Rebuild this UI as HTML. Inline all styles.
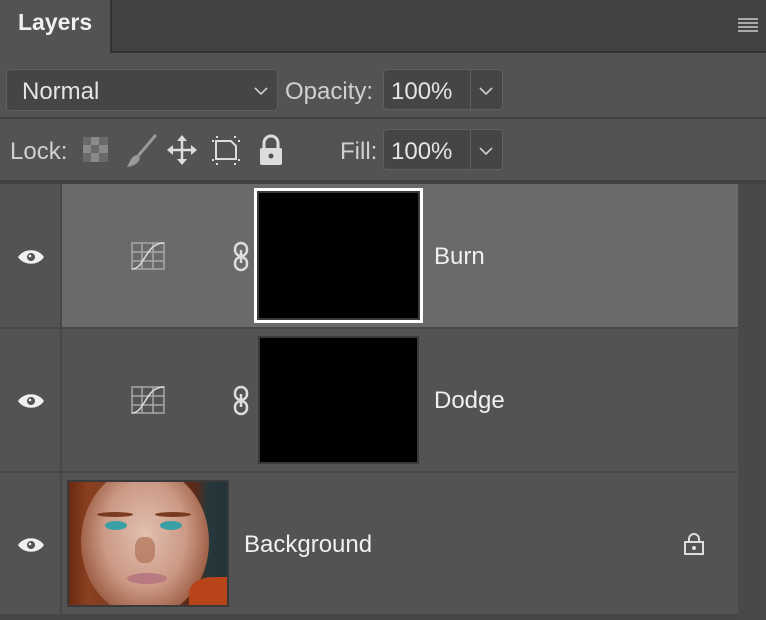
<!DOCTYPE html>
<html><head><style>
*{margin:0;padding:0;box-sizing:border-box}
body{width:766px;height:620px;background:#535353;font-family:"Liberation Sans",sans-serif;color:#e6e6e6;position:relative;overflow:hidden}
.a{position:absolute}
.box{position:absolute;background:#454545;border:1px solid #5f5f5f;border-radius:4px}
.t{position:absolute;font-size:24px;color:#e4e4e4}
</style></head><body>
<div class="a" style="left:0;top:0;width:766px;height:51px;background:#424242"></div>
<div class="a" style="left:0;top:51px;width:766px;height:2px;background:#333"></div>
<div class="a" style="left:0;top:0;width:110px;height:53px;background:#535353"></div>
<div class="a" style="left:110px;top:0;width:2px;height:52px;background:#333"></div>
<div class="t" style="left:18px;top:9px;font-weight:bold;font-size:23px;color:#f0f0f0">Layers</div>
<div class="a" style="left:738px;top:18px;width:20px;height:2px;background:#aaa;box-shadow:0 4px 0 #aaa,0 8px 0 #aaa,0 12px 0 #aaa"></div>

<div class="box" style="left:6px;top:69px;width:272px;height:42px"></div>
<div class="t" style="left:22px;top:78px">Normal</div>
<svg class="a" style="left:254px;top:86px" width="14" height="10"><path d="M1 2 L7 8 L13 2" stroke="#ccc" stroke-width="1.6" fill="none"/></svg>
<div class="t" style="left:285px;top:78px;color:#d0d0d0">Opacity:</div>
<div class="box" style="left:383px;top:69px;width:120px;height:41px"></div>
<div class="a" style="left:470px;top:70px;width:1px;height:39px;background:#5f5f5f"></div>
<div class="t" style="left:391px;top:78px">100%</div>
<svg class="a" style="left:479px;top:86px" width="14" height="10"><path d="M1 2 L7 8 L13 2" stroke="#ccc" stroke-width="1.6" fill="none"/></svg>

<div class="a" style="left:0;top:117px;width:766px;height:2px;background:#424242"></div>

<div class="t" style="left:10px;top:138px;color:#d0d0d0">Lock:</div>
<svg class="a" style="left:82px;top:136px" width="28" height="28"><rect x="1" y="1" width="25" height="25" fill="#8a8a8a"/><g fill="#6a6a6a"><rect x="1" y="1" width="8" height="8"/><rect x="17" y="1" width="9" height="8"/><rect x="9" y="9" width="8" height="8"/><rect x="1" y="17" width="8" height="9"/><rect x="17" y="17" width="9" height="9"/></g></svg>
<svg class="a" style="left:124px;top:134px" width="34" height="34"><path d="M31 2 L14 22" stroke="#9a9a9a" stroke-width="3" stroke-linecap="round"/><path d="M13 21 C7 22 6 28 3 33 C10 32 15 29 16 24Z" fill="#9a9a9a"/></svg>
<svg class="a" style="left:166px;top:134px" width="32" height="32"><g stroke="#ddd" stroke-width="2.5" fill="none"><path d="M16 4V28M4 16H28"/></g><g fill="#ddd"><path d="M16 1 L21 7 H11Z"/><path d="M16 31 L21 25 H11Z"/><path d="M1 16 L7 11 V21Z"/><path d="M31 16 L25 11 V21Z"/></g></svg>
<svg class="a" style="left:209px;top:134px" width="34" height="32"><path d="M7 7 H22 L27 12 V25 H7 Z" stroke="#ddd" stroke-width="2" fill="none"/><g fill="#ddd"><rect x="3" y="6" width="2" height="2"/><rect x="7" y="2" width="2" height="2"/><rect x="25" y="2" width="2" height="2"/><rect x="29" y="6" width="2" height="2"/><rect x="3" y="25" width="2" height="2"/><rect x="7" y="29" width="2" height="2"/><rect x="25" y="29" width="2" height="2"/><rect x="29" y="25" width="2" height="2"/></g></svg>
<svg class="a" style="left:257px;top:134px" width="28" height="32"><path d="M7 14 V9 a7 7 0 0 1 14 0 V14" stroke="#ddd" stroke-width="3" fill="none"/><rect x="3" y="14" width="22" height="17" rx="2" fill="#ddd"/><circle cx="14" cy="22" r="2.5" fill="#535353"/></svg>
<div class="t" style="left:340px;top:138px;color:#d0d0d0">Fill:</div>
<div class="box" style="left:383px;top:129px;width:120px;height:41px"></div>
<div class="a" style="left:470px;top:130px;width:1px;height:39px;background:#5f5f5f"></div>
<div class="t" style="left:391px;top:138px">100%</div>
<svg class="a" style="left:479px;top:146px" width="14" height="10"><path d="M1 2 L7 8 L13 2" stroke="#ccc" stroke-width="1.6" fill="none"/></svg>

<div class="a" style="left:0;top:180px;width:766px;height:4px;background:#424242"></div>
<div class="a" style="left:738px;top:184px;width:28px;height:436px;background:#494949"></div>

<div class="a" style="left:0;top:184px;width:60px;height:143px;background:#535353"></div>
<div class="a" style="left:60px;top:184px;width:2px;height:436px;background:#474747"></div>
<div class="a" style="left:62px;top:184px;width:676px;height:143px;background:#6a6a6a"></div>
<div class="a" style="left:0;top:327px;width:738px;height:2px;background:#474747"></div>
<div class="a" style="left:0;top:471px;width:738px;height:2px;background:#474747"></div>
<div class="a" style="left:0;top:614px;width:738px;height:6px;background:#474747"></div>

<svg class="a" style="left:17px;top:248px" width="28" height="18"><path d="M1 9 C7 0 21 0 27 9 C21 18 7 18 1 9Z" fill="#f0f0f0"/><circle cx="14" cy="9" r="4" fill="#535353"/><circle cx="13" cy="8" r="1.3" fill="#f0f0f0"/></svg>
<svg class="a" style="left:17px;top:392px" width="28" height="18"><path d="M1 9 C7 0 21 0 27 9 C21 18 7 18 1 9Z" fill="#f0f0f0"/><circle cx="14" cy="9" r="4" fill="#535353"/><circle cx="13" cy="8" r="1.3" fill="#f0f0f0"/></svg>
<svg class="a" style="left:17px;top:536px" width="28" height="18"><path d="M1 9 C7 0 21 0 27 9 C21 18 7 18 1 9Z" fill="#f0f0f0"/><circle cx="14" cy="9" r="4" fill="#535353"/><circle cx="13" cy="8" r="1.3" fill="#f0f0f0"/></svg>

<svg class="a" style="left:131px;top:242px" width="34" height="28"><g stroke="#a8a8a8" stroke-width="1.5" fill="none"><rect x="1" y="1" width="32" height="26"/><path d="M11 1V27M22 1V27M1 10H33M1 19H33"/></g><path d="M1 27 C14 27 14 1 33 1" stroke="#ddd" stroke-width="1.5" fill="none"/></svg>
<svg class="a" style="left:131px;top:386px" width="34" height="28"><g stroke="#a8a8a8" stroke-width="1.5" fill="none"><rect x="1" y="1" width="32" height="26"/><path d="M11 1V27M22 1V27M1 10H33M1 19H33"/></g><path d="M1 27 C14 27 14 1 33 1" stroke="#ddd" stroke-width="1.5" fill="none"/></svg>
<svg class="a" style="left:233px;top:241px" width="18" height="32"><g stroke="#ddd" stroke-width="2.5" fill="none"><rect x="2" y="2" width="12" height="13" rx="6"/><rect x="2" y="16" width="12" height="13" rx="6"/><path d="M8 9V22"/></g></svg>
<svg class="a" style="left:233px;top:385px" width="18" height="32"><g stroke="#ddd" stroke-width="2.5" fill="none"><rect x="2" y="2" width="12" height="13" rx="6"/><rect x="2" y="16" width="12" height="13" rx="6"/><path d="M8 9V22"/></g></svg>

<div class="a" style="left:254px;top:188px;width:169px;height:135px;background:#fff"></div>
<div class="a" style="left:257px;top:191px;width:163px;height:129px;background:#3a3a3a"></div>
<div class="a" style="left:259px;top:193px;width:159px;height:125px;background:#000"></div>
<div class="t" style="left:434px;top:243px;color:#f0f0f0">Burn</div>

<div class="a" style="left:258px;top:336px;width:161px;height:128px;background:#3a3a3a"></div>
<div class="a" style="left:260px;top:338px;width:157px;height:124px;background:#000"></div>
<div class="t" style="left:434px;top:387px;color:#f0f0f0">Dodge</div>

<div class="a" style="left:67px;top:480px;width:162px;height:127px;background:#3a3a3a"></div>
<div class="a" style="left:69px;top:482px;width:158px;height:123px;overflow:hidden;background:linear-gradient(90deg,#6a2a10 0%,#8a4020 12%,#5a2a18 80%,#26383a 88%,#223438 100%)">
  <div class="a" style="left:12px;top:-15px;width:128px;height:150px;border-radius:50%;background:radial-gradient(ellipse at 50% 45%,#e2c0b0 0%,#cc9a86 45%,#9a5a40 75%,rgba(120,60,30,0) 100%)"></div>
  <div class="a" style="left:120px;top:95px;width:60px;height:40px;background:#b8451a;border-radius:40% 0 0 0"></div>
  <div class="a" style="left:28px;top:30px;width:36px;height:5px;background:#7a3a20;border-radius:50%"></div>
  <div class="a" style="left:86px;top:30px;width:36px;height:5px;background:#7a3a20;border-radius:50%"></div>
  <div class="a" style="left:36px;top:39px;width:22px;height:9px;background:#3aa0a8;border-radius:50%"></div>
  <div class="a" style="left:91px;top:39px;width:22px;height:9px;background:#3aa0a8;border-radius:50%"></div>
  <div class="a" style="left:66px;top:55px;width:20px;height:26px;background:#a86848;border-radius:40%;opacity:.6"></div>
  <div class="a" style="left:58px;top:91px;width:40px;height:11px;background:#b87a80;border-radius:50%"></div>
</div>
<div class="t" style="left:244px;top:531px;color:#f0f0f0">Background</div>
<svg class="a" style="left:683px;top:532px" width="22" height="24"><path d="M6 10V7a5 5 0 0 1 10 0V10" stroke="#ddd" stroke-width="2" fill="none"/><rect x="2" y="10" width="18" height="12" stroke="#ddd" stroke-width="2" fill="none"/><circle cx="11" cy="16" r="2" fill="#ddd"/></svg>
</body></html>
